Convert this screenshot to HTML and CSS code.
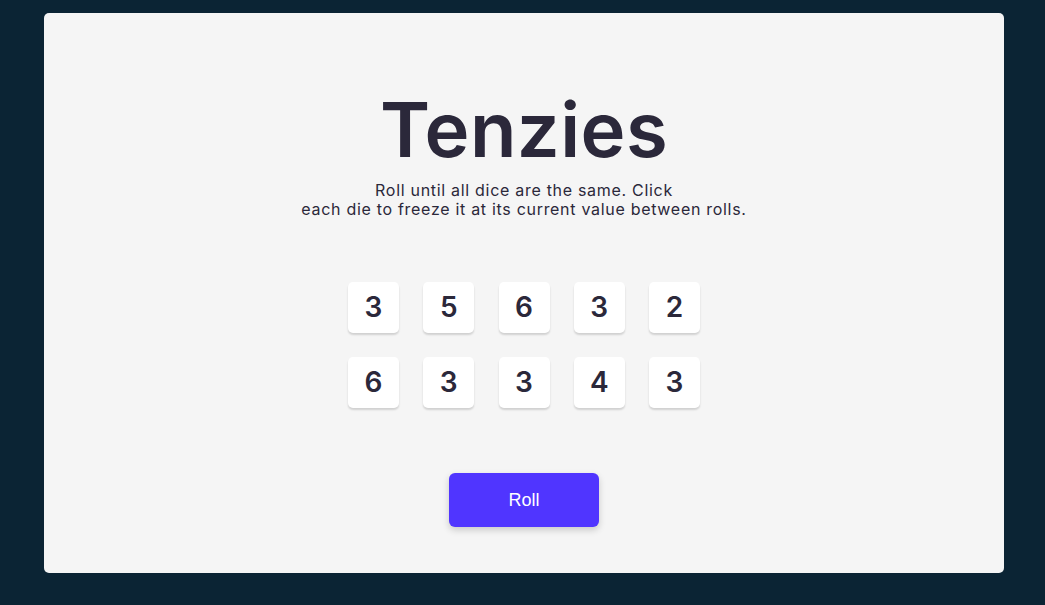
FILE: index.html
```html
<!DOCTYPE html>
<html lang="en">
<head>
<meta charset="utf-8">
<title>Tenzies</title>
<link rel="stylesheet" href="styles.css">
</head>
<body>
<main class="card">
  <h1 class="title">Tenzies</h1>
  <p class="instructions">Roll until all dice are the same. Click<br>each die to freeze it at its current value between rolls.</p>
  <div class="dice">
    <button class="die">3</button>
    <button class="die">5</button>
    <button class="die">6</button>
    <button class="die">3</button>
    <button class="die">2</button>
    <button class="die">6</button>
    <button class="die">3</button>
    <button class="die">3</button>
    <button class="die">4</button>
    <button class="die">3</button>
  </div>
  <button class="roll">Roll</button>
</main>
</body>
</html>
```
FILE: styles.css
```css
* { box-sizing: border-box; }
html, body { margin: 0; padding: 0; }
body {
  background: #0B2434;
  width: 1045px;
  height: 605px;
  padding-top: 13px;
  font-family: Inter, "Noto Sans", sans-serif;
}
.card {
  width: 960px;
  height: 560px;
  margin-left: 44px;
  background: #F5F5F5;
  border-radius: 5px;
  display: flex;
  flex-direction: column;
  align-items: center;
  padding-top: 78px;
}
.title {
  margin: 0;
  font-size: 76px;
  line-height: 1;
  font-weight: 600;
  letter-spacing: 0.4px;
  color: #2B283A;
}
.instructions {
  margin: 14px 0 0;
  font-size: 16px;
  line-height: 19px;
  text-align: center;
  color: #2B283A;
  letter-spacing: 0.7px;
}
.dice {
  display: grid;
  grid-template-columns: repeat(5, 51px);
  column-gap: 24.25px;
  row-gap: 24px;
  margin-top: 63px;
}
.die {
  width: 51px;
  height: 51px;
  border: none;
  background: #FFFFFF;
  border-radius: 5px;
  box-shadow: 0 2px 2px rgba(0, 0, 0, 0.15);
  font-family: Inter, "Noto Sans", sans-serif;
  font-size: 28px;
  font-weight: 600;
  color: #2B283A;
  display: flex;
  align-items: center;
  justify-content: center;
  padding: 0 0 2px;
}
.roll {
  margin-top: 65px;
  width: 150px;
  height: 54px;
  border: none;
  border-radius: 6px;
  background: #5035FF;
  color: #FFFFFF;
  font-family: "Liberation Sans", Arial, sans-serif;
  font-size: 18px;
  box-shadow: 0 3px 7px rgba(0, 0, 0, 0.18);
}
```
